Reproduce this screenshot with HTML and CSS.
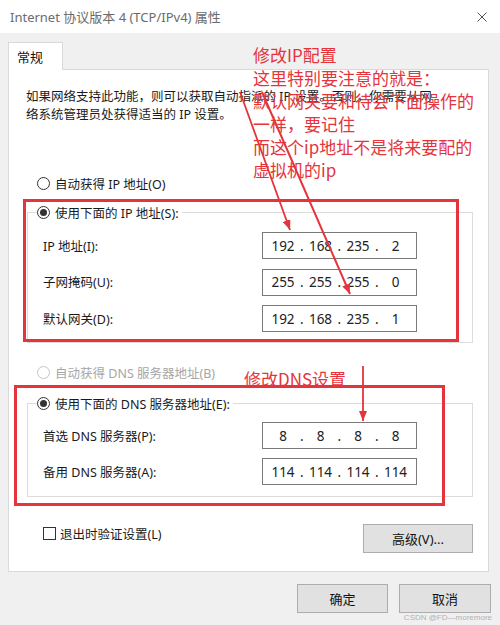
FILE: index.html
```html
<!DOCTYPE html>
<html lang="zh-CN">
<head>
<meta charset="utf-8">
<title>Internet 协议版本 4 (TCP/IPv4) 属性</title>
<link rel="stylesheet" href="styles.css">
</head>
<body>
<div class="window">
  <div class="titlebar">
    <span class="title">Internet 协议版本 4 (TCP/IPv4) 属性</span>
    <svg class="close" width="10" height="10" viewBox="0 0 10 10"><path d="M0.5 0.5 L9.5 9.5 M9.5 0.5 L0.5 9.5" stroke="#555" stroke-width="1" fill="none"/></svg>
  </div>
  <div class="body">
    <div class="tab">常规</div>
    <div class="panel">
      <p class="desc">如果网络支持此功能，则可以获取自动指派的 IP 设置。否则，你需要从网<br>络系统管理员处获得适当的 IP 设置。</p>
      <div class="radio-row auto-ip"><span class="radio"></span>自动获得 IP 地址(O)</div>
      <div class="group">
        <div class="group-head"><span class="radio checked"></span>使用下面的 IP 地址(S):</div>
        <div class="fields">
          <span class="label">IP 地址(I):</span>
          <div class="ipbox"><span class="seg">192</span><span class="dot">.</span><span class="seg">168</span><span class="dot">.</span><span class="seg">235</span><span class="dot">.</span><span class="seg">2</span></div>
          <span class="label">子网掩码(U):</span>
          <div class="ipbox"><span class="seg">255</span><span class="dot">.</span><span class="seg">255</span><span class="dot">.</span><span class="seg">255</span><span class="dot">.</span><span class="seg">0</span></div>
          <span class="label">默认网关(D):</span>
          <div class="ipbox"><span class="seg">192</span><span class="dot">.</span><span class="seg">168</span><span class="dot">.</span><span class="seg">235</span><span class="dot">.</span><span class="seg">1</span></div>
        </div>
      </div>
      <div class="radio-row auto-dns disabled"><span class="radio"></span>自动获得 DNS 服务器地址(B)</div>
      <div class="group dns">
        <div class="group-head"><span class="radio checked"></span>使用下面的 DNS 服务器地址(E):</div>
        <div class="fields">
          <span class="label">首选 DNS 服务器(P):</span>
          <div class="ipbox"><span class="seg">8</span><span class="dot">.</span><span class="seg">8</span><span class="dot">.</span><span class="seg">8</span><span class="dot">.</span><span class="seg">8</span></div>
          <span class="label">备用 DNS 服务器(A):</span>
          <div class="ipbox"><span class="seg">114</span><span class="dot">.</span><span class="seg">114</span><span class="dot">.</span><span class="seg">114</span><span class="dot">.</span><span class="seg">114</span></div>
        </div>
      </div>
      <div class="bottom-row">
        <div class="check-row"><span class="checkbox"></span>退出时验证设置(L)</div>
        <button class="btn adv">高级(V)...</button>
      </div>
    </div>
    <div class="footer">
      <button class="btn ok">确定</button>
      <button class="btn cancel">取消</button>
    </div>
  </div>

  <div class="redbox box-ip"></div>
  <div class="redbox box-dns"></div>
  <svg class="arrows" width="500" height="625" viewBox="0 0 500 625">
    <defs>
      <marker id="ah" markerUnits="userSpaceOnUse" markerWidth="10" markerHeight="8" refX="10" refY="4" orient="auto">
        <path d="M0 0 L10 4 L0 8 Z" fill="#e5343b"/>
      </marker>
    </defs>
    <line x1="240" y1="92" x2="290" y2="230" stroke="#e5343b" stroke-width="1.8" marker-end="url(#ah)"/>
    <line x1="262" y1="92" x2="350" y2="294" stroke="#e5343b" stroke-width="2" marker-end="url(#ah)"/>
    <line x1="363" y1="366" x2="363" y2="421" stroke="#e5343b" stroke-width="1.8" marker-end="url(#ah)"/>
  </svg>
  <div class="note note-ip">修改IP配置<br>这里特别要注意的就是：<br>默认网关要和待会下面操作的<br>一样，要记住<br>而这个ip地址不是将来要配的<br>虚拟机的ip</div>
  <div class="note note-dns">修改DNS设置</div>
  <div class="watermark">CSDN @FD—moremore</div>
</div>
</body>
</html>
```

FILE: styles.css
```css
html, body {
  margin: 0;
  padding: 0;
}
body {
  font-family: "Noto Sans", "Noto Sans CJK SC", sans-serif;
  font-size: 12.5px;
  color: #1a1a1a;
}
.window {
  position: relative;
  width: 500px;
  height: 625px;
  background: #f0f0f0;
  overflow: hidden;
}
.titlebar {
  height: 33px;
  background: #fff;
  display: flex;
  align-items: center;
  justify-content: space-between;
  padding: 0 13px 0 10px;
  box-sizing: border-box;
}
.title {
  color: #6b6b6b;
  font-size: 13px;
  line-height: 18px;
  font-family: "Noto Sans", "Noto Sans CJK SC", sans-serif;
}
.close {
  display: block;
}
.body {
  padding: 9px 0 0 8px;
}
.tab {
  width: 55px;
  height: 28px;
  box-sizing: border-box;
  border: 1px solid #d9d9d9;
  border-bottom: none;
  background: #fff;
  margin-bottom: -1px;
  position: relative;
  z-index: 1;
  display: flex;
  align-items: center;
  padding-left: 8px;
  font-size: 13px;
  color: #111;
}
.panel {
  width: 481px;
  box-sizing: border-box;
  border: 1px solid #d9d9d9;
  background: #fff;
  padding: 18px 0 18px 0;
}
.desc {
  margin: 0 0 0 17px;
  line-height: 18px;
  white-space: nowrap;
  overflow: hidden;
}
.radio-row {
  display: flex;
  align-items: center;
  height: 18px;
  gap: 5px;
  margin-left: 28px;
}
.auto-ip {
  margin-top: 50px;
}
.auto-dns {
  margin-top: 20px;
}
.radio {
  width: 13px;
  height: 13px;
  box-sizing: border-box;
  border: 1px solid #333;
  border-radius: 50%;
  background: #fff;
  display: flex;
  align-items: center;
  justify-content: center;
  flex: none;
}
.radio.checked::after {
  content: "";
  width: 7px;
  height: 7px;
  border-radius: 50%;
  background: #333;
}
.disabled {
  color: #a6a6a6;
}
.disabled .radio {
  border-color: #c4c4c4;
}
.group {
  margin: 20px 15px 0 18px;
  border: 1px solid #dcdcdc;
  padding: 0 0 10px 0;
}
.group.dns {
  margin-top: 22px;
  padding-bottom: 11px;
}
.group-head {
  display: flex;
  align-items: center;
  gap: 5px;
  width: max-content;
  height: 18px;
  margin: -10px 0 0 9px;
  padding-right: 3px;
  background: #fff;
}
.fields {
  display: grid;
  grid-template-columns: 219px 155px;
  row-gap: 9.5px;
  margin: 11px 0 0 15px;
}
.dns .fields {
  row-gap: 9px;
  margin-top: 10px;
}
.label {
  align-self: center;
  line-height: 18px;
  padding-top: 2px;
}
.ipbox {
  height: 27px;
  box-sizing: border-box;
  border: 1px solid #7a7a7a;
  background: #fff;
  display: flex;
  align-items: center;
  padding-left: 4.5px;
  font-size: 13.5px;
  color: #222;
  font-family: "Noto Sans", "Open Sans", sans-serif;
}
.seg {
  width: 31px;
  text-align: center;
}
.dot {
  width: 6.5px;
  text-align: center;
}
.bottom-row {
  display: flex;
  justify-content: space-between;
  align-items: flex-start;
  margin: 27px 15px 0 34px;
}
.check-row {
  display: flex;
  align-items: center;
  height: 18px;
  gap: 4px;
}
.checkbox {
  width: 13px;
  height: 13px;
  box-sizing: border-box;
  border: 1px solid #333;
  background: #fff;
}
.btn {
  height: 29px;
  box-sizing: border-box;
  background: #e1e1e1;
  border: 1px solid #adadad;
  padding: 0;
  font-family: "Noto Sans", "Noto Sans CJK SC", sans-serif;
  font-size: 13px;
  color: #111;
}
.adv {
  width: 110px;
}
.footer {
  display: flex;
  justify-content: flex-end;
  gap: 11px;
  margin-top: 12px;
  padding-right: 9px;
}
.ok {
  width: 91px;
}
.cancel {
  width: 92px;
}
.redbox {
  position: absolute;
  border: 3px solid #e5343b;
  box-sizing: border-box;
}
.box-ip {
  left: 23px;
  top: 199px;
  width: 436px;
  height: 143px;
}
.box-dns {
  left: 14px;
  top: 385px;
  width: 431px;
  height: 121px;
}
.arrows {
  position: absolute;
  left: 0;
  top: 0;
}
.note {
  position: absolute;
  color: #e5343b;
  font-family: "Noto Sans CJK SC", sans-serif;
  font-size: 17px;
  line-height: 23px;
  white-space: nowrap;
}
.note-ip {
  left: 253px;
  top: 43px;
}
.note-dns {
  left: 244px;
  top: 367px;
}
.watermark {
  position: absolute;
  right: 8px;
  top: 612px;
  font-size: 8px;
  line-height: 11px;
  color: #b0b0b0;
  font-family: "Liberation Sans", sans-serif;
  white-space: nowrap;
}
```
